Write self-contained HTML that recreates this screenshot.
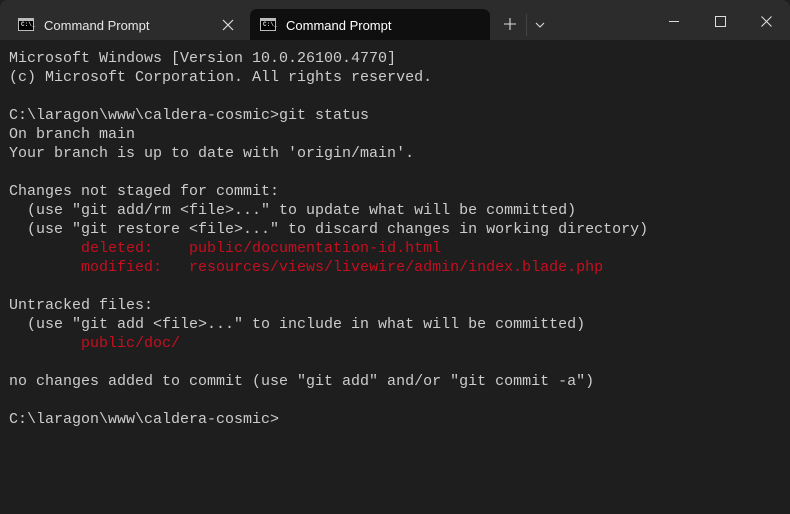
<!DOCTYPE html>
<html><head><meta charset="utf-8"><style>
html,body{margin:0;padding:0;width:790px;height:514px;overflow:hidden;background:#1f1f1f}
.win{position:absolute;left:0;top:0;width:790px;height:514px;background:#1e1e1e;border-radius:8px 8px 0 0;overflow:hidden}
.title{position:absolute;left:0;top:0;width:790px;height:40px;background:#2c2c2c}
.tab{position:absolute;top:9px;height:31px;font:13px "Liberation Sans",sans-serif;color:#e6e6e6}
.tab .lbl{position:absolute;left:36px;top:9px}
.tab1{left:8px;width:240px}
.tab2{left:250px;width:240px;background:#0f0f0f;border-radius:7px 7px 0 0;color:#fff}
.ico{position:absolute;left:10px;top:9px;width:14px;height:11px;border:1px solid #bbb;background:#000}
.ico:before{content:"";position:absolute;left:0;top:0;width:14px;height:2px;background:#bbb}
.ico:after{content:"C:\\_";position:absolute;left:2px;top:2px;font:bold 6px "Liberation Mono",monospace;color:#ddd}
pre{position:absolute;left:9px;top:49px;margin:0;font:15px/19px "Liberation Mono",monospace;color:#cccccc}
.r{color:#c50f1f}
</style></head><body><div class="win">
<div class="title">
<div class="tab tab1"><div class="ico"></div><span class="lbl">Command Prompt</span></div>
<svg style="position:absolute;left:222px;top:19px" width="12" height="12"><path d="M1 1L11 11M11 1L1 11" stroke="#ddd" stroke-width="1.2"/></svg>
<div class="tab tab2"><div class="ico"></div><span class="lbl">Command Prompt</span></div>
<svg style="position:absolute;left:504px;top:18px" width="12" height="12"><path d="M6 0V12M0 6H12" stroke="#ddd" stroke-width="1.1"/></svg>
<div style="position:absolute;left:526px;top:14px;width:1px;height:22px;background:#444"></div>
<svg style="position:absolute;left:535px;top:22px" width="10" height="6"><path d="M1 1L5 5L9 1" stroke="#ddd" stroke-width="1.1" fill="none"/></svg>
<div style="position:absolute;left:669px;top:21px;width:10px;height:1px;background:#ddd"></div>
<div style="position:absolute;left:715px;top:16px;width:9px;height:9px;border:1px solid #ddd"></div>
<svg style="position:absolute;left:761px;top:16px" width="11" height="11"><path d="M0.5 0.5L10.5 10.5M10.5 0.5L0.5 10.5" stroke="#ddd" stroke-width="1.1"/></svg>
</div>
<pre>Microsoft Windows [Version 10.0.26100.4770]
(c) Microsoft Corporation. All rights reserved.

C:\laragon\www\caldera-cosmic>git status
On branch main
Your branch is up to date with 'origin/main'.

Changes not staged for commit:
  (use "git add/rm &lt;file&gt;..." to update what will be committed)
  (use "git restore &lt;file&gt;..." to discard changes in working directory)
        <span class="r">deleted:    public/documentation-id.html</span>
        <span class="r">modified:   resources/views/livewire/admin/index.blade.php</span>

Untracked files:
  (use "git add &lt;file&gt;..." to include in what will be committed)
        <span class="r">public/doc/</span>

no changes added to commit (use "git add" and/or "git commit -a")

C:\laragon\www\caldera-cosmic></pre>
</div></body></html>
